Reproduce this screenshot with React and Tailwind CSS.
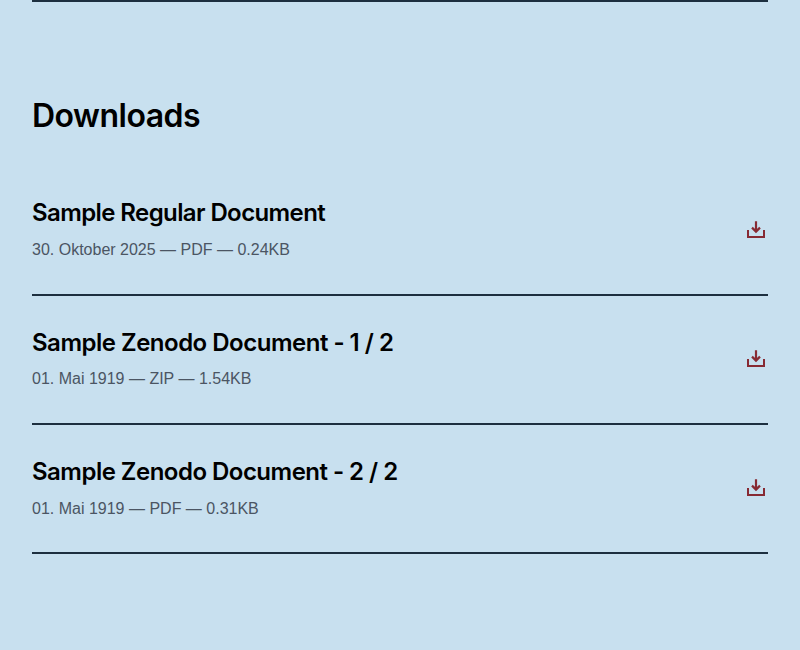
const items = [
  { title: 'Sample Regular Document', meta: '30. Oktober 2025 — PDF — 0.24KB', tracking: 'tracking-[-0.6px]' },
  { title: 'Sample Zenodo Document - 1 / 2', meta: '01. Mai 1919 — ZIP — 1.54KB', tracking: 'tracking-[-0.5px]' },
  { title: 'Sample Zenodo Document - 2 / 2', meta: '01. Mai 1919 — PDF — 0.31KB', tracking: 'tracking-[-0.52px]' },
];

function DownloadIcon() {
  return (
    <svg width="24" height="24" viewBox="0 0 24 24" fill="none" stroke="#872a33" strokeWidth="2">
      <path d="M4 12v7h16v-7" />
      <path d="M12 3.3v10M8 9.6l4 4 4-4" strokeWidth="2.2" />
    </svg>
  );
}

export default function App() {
  return (
    <main className="h-[650px] overflow-hidden bg-[#c8e0ef] px-8 font-['Liberation_Sans',sans-serif]">
      <div className="h-0.5 bg-[#1d2f3f]" />
      <h2 className="mt-[94px] font-['Inter',sans-serif] text-[32px] leading-10 font-semibold tracking-[-0.5px] text-black">Downloads</h2>
      <ul className="mt-[30.6px]">
        {items.map((item) => (
          <li key={item.title} className="flex h-[129.25px] items-center justify-between border-b-2 border-[#1d2f3f] pb-px">
            <div>
              <h3 className={`font-['Inter',sans-serif] text-2xl font-semibold text-black ${item.tracking}`}>{item.title}</h3>
              <p className="mt-[8.8px] text-base leading-6 text-[#4b5563]">{item.meta}</p>
            </div>
            <DownloadIcon />
          </li>
        ))}
      </ul>
    </main>
  );
}
